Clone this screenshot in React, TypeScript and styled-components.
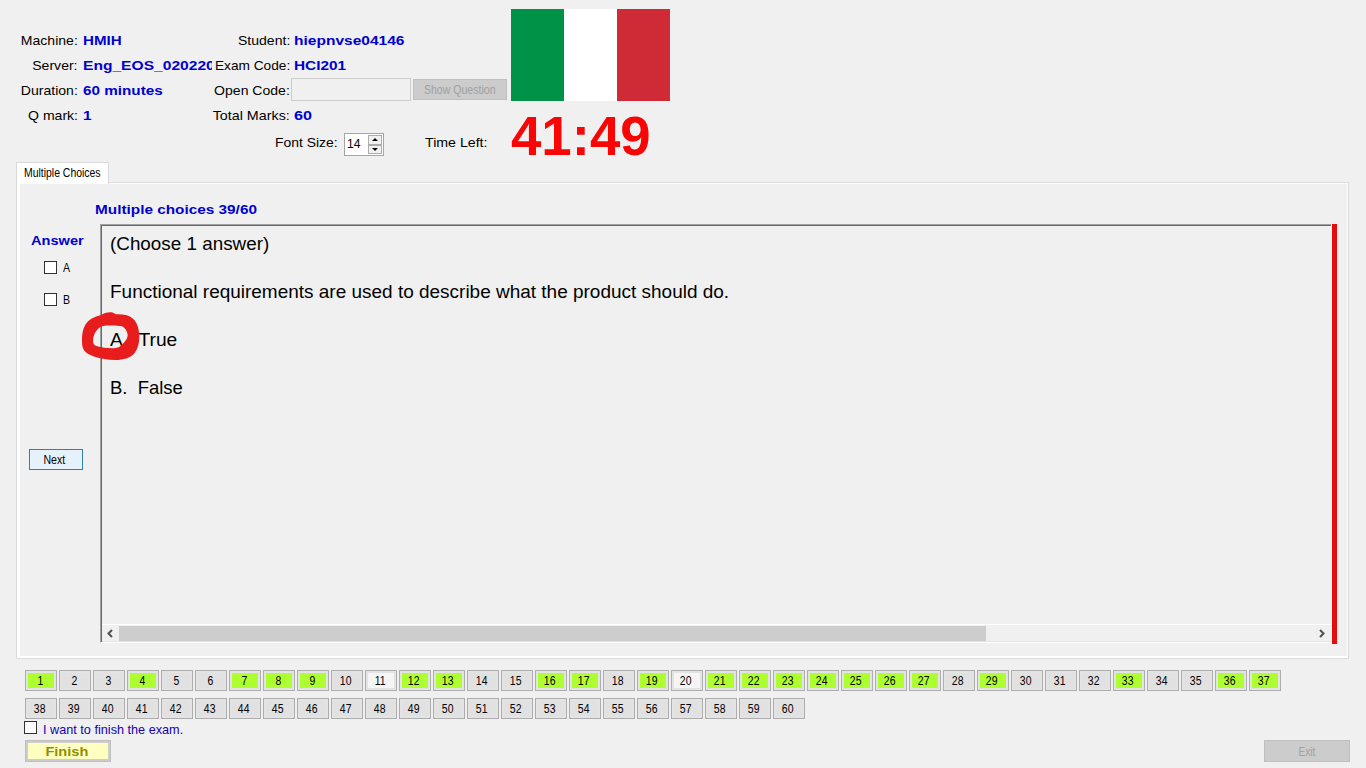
import React from "react";
import styled, { createGlobalStyle } from "styled-components";

const GlobalStyle = createGlobalStyle`
  * { box-sizing: border-box; }
  body { margin: 0; background: #f0f0f0; overflow: hidden; }
  button, input { font-family: inherit; }
`;

const Window = styled.div`
  display: flex;
  flex-direction: column;
  width: 1366px;
  height: 768px;
  background: #f0f0f0;
  color: #000;
  font-family: "Liberation Sans", Arial, sans-serif;
`;

/* Text whose glyphs are stretched or condensed to bitmap-font proportions */
const Text = styled.span<{ $size?: number; $stretch?: number; $origin?: string }>`
  display: inline-block;
  white-space: pre;
  font-size: ${(p) => p.$size ?? 13.5}px;
  transform: scaleX(${(p) => p.$stretch ?? 1});
  transform-origin: ${(p) => p.$origin ?? "left"} center;
`;

const BoldText = styled(Text)`
  font-weight: 700;
  color: #0000cf;
`;

const Header = styled.header`
  display: flex;
  height: 162px;
`;

const Details = styled.div`
  width: 511px;
  padding-top: 28px;
`;

const InfoGrid = styled.div`
  display: grid;
  grid-template-columns: 78px 134px 78px 1fr;
  grid-auto-rows: 25px;
  align-items: center;
`;

const Label = styled.div`
  text-align: right;
  line-height: 23px;
  height: 25px;
`;

const Value = styled.div<{ $indent: number }>`
  height: 25px;
  padding-left: ${(p) => p.$indent}px;
  line-height: 23px;
  overflow: hidden;
`;

const OpenCode = styled.div`
  display: flex;
  align-items: center;
  gap: 2px;
  height: 25px;
  padding: 0 0 2px 1px;
`;

const CodeInput = styled.input`
  width: 120px;
  height: 23px;
  border: 1px solid #cccccc;
  background: #f0f0f0;
  outline: 0;
`;

const DisabledButton = styled.button<{ $w: number; $h: number }>`
  width: ${(p) => p.$w}px;
  height: ${(p) => p.$h}px;
  padding: 0;
  border: 1px solid #bfbfbf;
  background: #cccccc;
  color: #a0a0a0;
  text-align: center;
`;

const SettingsRow = styled.div`
  display: flex;
  align-items: center;
  height: 28px;
  padding-left: 275px;
`;

const FontSizeLabel = styled.div`
  width: 69px;
`;

const Spinner = styled.div`
  display: flex;
  width: 40px;
  height: 23px;
  margin: 5px 41px 0 0;
  padding: 1px 1px 1px 2px;
  border: 1px solid #a5a5a5;
  background: #fff;
  line-height: 17px;
`;

const SpinnerArrows = styled.div`
  display: flex;
  flex-direction: column;
  width: 14px;
  margin-left: auto;
`;

const SpinnerArrow = styled.div`
  display: flex;
  flex: 1;
  align-items: center;
  justify-content: center;
  border: 1px solid #acacac;
  background: #f0f0f0;
`;

const TimerColumn = styled.div`
  padding-top: 9px;
`;

const Flag = styled.div`
  display: grid;
  grid-template-columns: repeat(3, 1fr);
  width: 159px;
  height: 92px;
`;

const Stripe = styled.div<{ $color: string }>`
  background: ${(p) => p.$color};
`;

const Clock = styled.div`
  height: 61px;
  margin-top: 3px;
  color: #f80505;
  font-weight: 700;
  line-height: 64px;
`;

const Tab = styled.div`
  position: relative;
  z-index: 1;
  width: 93px;
  height: 22px;
  margin: 0 0 -2px 16px;
  padding-left: 7px;
  border: 1px solid #d9d9d9;
  border-bottom: 0;
  background: #fff;
  line-height: 17px;
`;

const Panel = styled.main`
  display: flex;
  width: 1333px;
  height: 477px;
  margin-left: 16px;
  border: 1px solid #dcdcdc;
  background: #f0f0f0;
  box-shadow: inset 3px 1px 0 #fff, inset -1px -2px 0 #fff;
`;

const AnswerColumn = styled.aside`
  width: 83px;
  padding: 47px 0 0 12px;
`;

const AnswerTitle = styled.div`
  height: 31px;
  padding-left: 2px;
  line-height: 19px;
`;

const AnswerOption = styled.label`
  display: flex;
  align-items: center;
  gap: 6px;
  height: 13px;
  margin: 0 0 19px 15px;
`;

const CheckBox = styled.span`
  width: 13px;
  height: 13px;
  border: 1px solid #333;
  background: #fff;
`;

const NextButton = styled.button`
  display: block;
  width: 54px;
  height: 21px;
  margin-top: 143px;
  padding: 0 3px 0 0;
  border: 1px solid #2f7fb0;
  background: #e5f1fb;
  color: #000;
`;

const QuestionColumn = styled.section`
  flex: 1;
  padding-top: 16px;
`;

const QuestionTitle = styled.div`
  height: 25px;
  margin-left: -5px;
  line-height: 19px;
`;

const QuestionRow = styled.div`
  display: flex;
  height: 420px;
`;

const QuestionBox = styled.div`
  display: flex;
  flex-direction: column;
  position: relative;
  width: 1231px;
  height: 419px;
  margin-right: 1px;
  border-style: solid;
  border-width: 1px 0 1px 1px;
  border-color: #a0a0a0 #fff #fff #a0a0a0;
  box-shadow: inset 1px 1px 0 #696969, inset 0 -1px 0 #e3e3e3;
`;

const QuestionText = styled.div`
  flex: 1;
  padding: 7px 0 0 9px;
  line-height: 24px;
`;

const Line = styled.div`
  height: 24px;
`;

const RedBar = styled.div`
  width: 5px;
  height: 420px;
  background: #e60c0c;
`;

const ScrollBar = styled.div`
  display: flex;
  align-items: center;
  height: 17px;
  margin: 0 0 1px 1px;
  border-top: 1px solid #fff;
`;

const ScrollThumb = styled.div`
  width: 867px;
  height: 15px;
  margin-right: auto;
  background: #cdcdcd;
`;

const ScrollArrow = styled.svg`
  width: 17px;
  height: 15px;
  fill: none;
  stroke: #505050;
  stroke-width: 2;
`;

const HandDrawnRing = styled.svg`
  position: absolute;
  left: -23px;
  top: 83px;
  width: 66px;
  height: 56px;
  fill: #e81c1c;
`;

const NumberGrid = styled.nav`
  display: grid;
  grid-template-columns: repeat(37, 32px);
  grid-auto-rows: 21px;
  gap: 7px 2px;
  margin: 11px 0 0 25px;
`;

const fills = { answered: "#adff2f", visited: "#f5f5f5", plain: "#e1e1e1" };
type Status = keyof typeof fills;

const NumberButton = styled.button<{ $status: Status }>`
  padding: 0 2px 0 0;
  border: 1px solid #adadad;
  background: ${(p) => fills[p.$status]};
  box-shadow: inset 0 0 0 2px #e3e3e3;
  color: #000;
  text-align: center;
`;

const FinishOption = styled.label`
  display: flex;
  align-items: center;
  gap: 6px;
  height: 15px;
  margin: 1px 0 0 24px;
  color: #1500b4;
`;

const FinishCaption = styled.span`
  padding-top: 2px;
`;

const Footer = styled.footer`
  display: flex;
  justify-content: space-between;
  margin: 5px 16px 0 25px;
`;

const FinishButton = styled.button`
  width: 86px;
  height: 22px;
  padding: 1px 3px 0 0;
  border: 1px solid #bfbfbf;
  background: #ffffc0;
  box-shadow: inset 0 0 0 2px #cccccc;
  color: #8f8f00;
  font-weight: 700;
`;

const answered = new Set([1, 4, 7, 8, 9, 12, 13, 16, 17, 19, 21, 22, 23, 24, 25, 26, 27, 29, 33, 36, 37]);
const visited = new Set([11, 20]);
const statusOf = (n: number): Status => (answered.has(n) ? "answered" : visited.has(n) ? "visited" : "plain");

const questionLines: [string, number][] = [
  ["(Choose 1 answer)", 1.01],
  ["", 1],
  ["Functional requirements are used to describe what the product should do.", 1.017],
  ["", 1],
  ["A.  True", 1.03],
  ["", 1],
  ["B.  False", 0.99],
];

const Caption = ({ children }: { children: string }) => (
  <Label>
    <Text $stretch={1.04} $origin="right">{children}</Text>
  </Label>
);

export default function App() {
  return (
    <Window>
      <GlobalStyle />
      <Header>
        <Details>
          <InfoGrid>
            <Caption>Machine:</Caption>
            <Value $indent={5}><BoldText $stretch={1.12}>HMIH</BoldText></Value>
            <Caption>Student:</Caption>
            <Value $indent={4}><BoldText $stretch={1.15}>hiepnvse04146</BoldText></Value>
            <Caption>Server:</Caption>
            <Value $indent={5}><BoldText $stretch={1.155}>Eng_EOS_02022020</BoldText></Value>
            <Label><Text $stretch={1.015} $origin="right">Exam Code:</Text></Label>
            <Value $indent={4}><BoldText $stretch={1.14}>HCI201</BoldText></Value>
            <Caption>Duration:</Caption>
            <Value $indent={5}><BoldText $stretch={1.13}>60 minutes</BoldText></Value>
            <Caption>Open Code:</Caption>
            <OpenCode>
              <CodeInput disabled />
              <DisabledButton $w={94} $h={21} disabled>
                <Text $size={12} $stretch={0.88} $origin="center">Show Question</Text>
              </DisabledButton>
            </OpenCode>
            <Caption>Q mark:</Caption>
            <Value $indent={5}><BoldText $stretch={1.14}>1</BoldText></Value>
            <Label><Text $stretch={1.06} $origin="right">Total Marks:</Text></Label>
            <Value $indent={4}><BoldText $stretch={1.2}>60</BoldText></Value>
          </InfoGrid>
          <SettingsRow>
            <FontSizeLabel><Text $stretch={1.03}>Font Size:</Text></FontSizeLabel>
            <Spinner>
              <Text $size={13.5} $stretch={0.9}>14</Text>
              <SpinnerArrows>
                <SpinnerArrow><svg width="6" height="3"><path d="M0 3 3 0 6 3Z" /></svg></SpinnerArrow>
                <SpinnerArrow><svg width="6" height="3"><path d="M0 0 3 3 6 0Z" /></svg></SpinnerArrow>
              </SpinnerArrows>
            </Spinner>
            <Text $stretch={1.05}>Time Left:</Text>
          </SettingsRow>
        </Details>
        <TimerColumn>
          <Flag>
            <Stripe $color="#009246" />
            <Stripe $color="#ffffff" />
            <Stripe $color="#ce2b37" />
          </Flag>
          <Clock><Text $size={56} $stretch={0.975}>41:49</Text></Clock>
        </TimerColumn>
      </Header>

      <Tab><Text $size={12} $stretch={0.87}>Multiple Choices</Text></Tab>
      <Panel>
        <AnswerColumn>
          <AnswerTitle><BoldText $stretch={1.08}>Answer</BoldText></AnswerTitle>
          {["A", "B"].map((option) => (
            <AnswerOption key={option}>
              <CheckBox />
              <Text $size={12} $stretch={0.88}>{option}</Text>
            </AnswerOption>
          ))}
          <NextButton><Text $size={12} $stretch={0.88} $origin="center">Next</Text></NextButton>
        </AnswerColumn>
        <QuestionColumn>
          <QuestionTitle><BoldText $stretch={1.136}>Multiple choices 39/60</BoldText></QuestionTitle>
          <QuestionRow>
            <QuestionBox>
              <QuestionText>
                {questionLines.map(([line, stretch], i) => (
                  <Line key={i}><Text $size={18.67} $stretch={stretch}>{line}</Text></Line>
                ))}
              </QuestionText>
              <ScrollBar>
                <ScrollArrow viewBox="0 0 17 15"><path d="M10 4 6.500 7.500 10 11" /></ScrollArrow>
                <ScrollThumb />
                <ScrollArrow viewBox="0 0 17 15"><path d="M6 4 9.500 7.500 6 11" /></ScrollArrow>
              </ScrollBar>
              <HandDrawnRing viewBox="0 0 198 168">
                <path
                  fillRule="evenodd"
                  d="M12 96C12 70 18 52 31 39C43 29 56 25 68 22C77 15 92 11 102 13C107 14 109 18 114 19C136 18 154 22 166 33C178 45 183 62 184 84C184 104 180 124 168 137C156 150 138 155 112 156C88 156 68 151 50 146C36 142 20 135 15 121C12 112 12 104 12 96ZM45 99C46 78 56 61 74 54C92 52 118 52 132 55C142 60 147 70 149 80C149 92 141 100 134 108C127 116 118 121 105 121C86 121 70 118 58 115C48 112 45 106 45 99Z"
                />
              </HandDrawnRing>
            </QuestionBox>
            <RedBar />
          </QuestionRow>
        </QuestionColumn>
      </Panel>

      <NumberGrid>
        {Array.from({ length: 60 }, (_, i) => i + 1).map((n) => (
          <NumberButton key={n} $status={statusOf(n)}>
            <Text $size={12} $stretch={0.87} $origin="center">{n}</Text>
          </NumberButton>
        ))}
      </NumberGrid>
      <FinishOption>
        <CheckBox />
        <FinishCaption><Text $size={13} $stretch={0.975}>I want to finish the exam.</Text></FinishCaption>
      </FinishOption>
      <Footer>
        <FinishButton><Text $size={13.5} $stretch={1.08} $origin="center">Finish</Text></FinishButton>
        <DisabledButton $w={86} $h={22} disabled><Text $size={12} $stretch={0.84} $origin="center">Exit</Text></DisabledButton>
      </Footer>
    </Window>
  );
}
